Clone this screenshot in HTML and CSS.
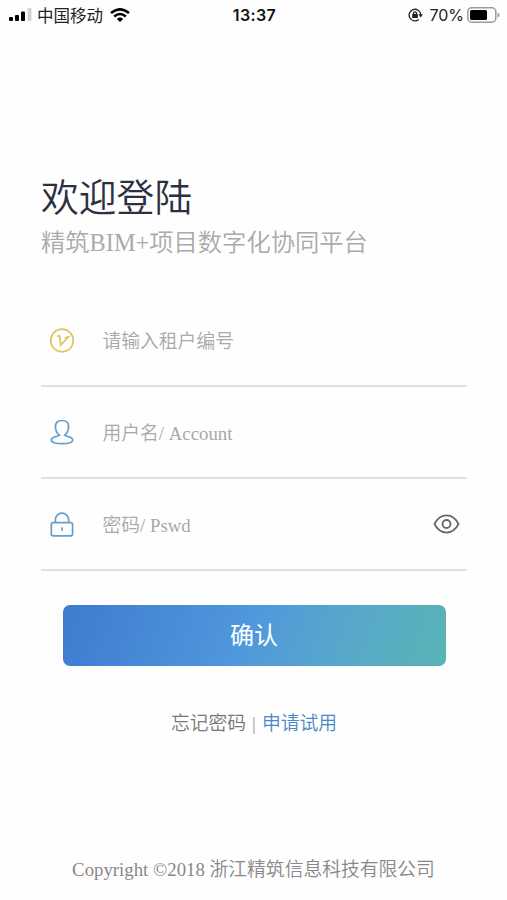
FILE: index.html
```
<!DOCTYPE html>
<html lang="zh-CN">

<head>
    <meta charset="UTF-8">
    <meta name="viewport" content="width=device-width, initial-scale=1.0">
    <title>欢迎登陆</title>
    <link rel="stylesheet" href="styles.css">
</head>

<body>
    <div class="status-bar">
        <div class="status-left">
            <svg class="signal" width="23" height="14" viewBox="0 0 23 14">
                <rect x="0" y="9" width="4" height="4" rx="1" />
                <rect x="6" y="7" width="4" height="6" rx="1" />
                <rect x="12" y="3.5" width="4" height="9.5" rx="1" />
                <rect x="18.5" y="0" width="4" height="13" rx="1" fill="#d4d4d4" />
            </svg>
            <span class="carrier">中国移动</span>
            <svg class="wifi" width="20" height="14" viewBox="0 0 20 14" fill="none" stroke="#000" stroke-width="2.6">
                <path d="M1 5Q10-2.4 19 5" />
                <path d="M4.2 8.4Q10 3.6 15.8 8.4" />
                <path d="M10 14L6.8 10.9Q10 8.2 13.2 10.9Z" fill="#000" stroke="none" />
            </svg>
        </div>
        <span class="time">13:37</span>
        <div class="status-right">
            <svg class="rotation" width="15" height="14" viewBox="0 0 15 14" fill="none" stroke="#222" stroke-width="1.3">
                <path d="M10.8 11.4A5.8 5.8 0 1 1 12.7 6.5" />
                <path d="M10.4 6.3H15L12.7 9.4Z" fill="#222" stroke="none" />
                <rect x="4.2" y="6" width="5.6" height="4" fill="#222" stroke="none" />
                <path d="M5.5 6.5V5.3A1.5 1.5 0 0 1 8.5 5.3V6.5" />
            </svg>
            <span class="percent">70%</span>
            <svg class="battery" width="33" height="16" viewBox="0 0 33 16">
                <rect x=".8" y=".8" width="28" height="14.4" rx="4" fill="none" stroke="#999" stroke-width="1.5" />
                <rect x="3" y="3" width="17" height="10" rx="1.5" />
                <path d="M30.5 5.5Q32.5 6 32.5 8T30.5 10.5Z" fill="#999" />
            </svg>
        </div>
    </div>

    <div class="container">
        <h1>欢迎登陆</h1>
        <p class="subtitle">精筑BIM+项目数字化协同平台</p>

        <form id="loginForm">
            <div class="field">
                <svg class="icon" width="26" height="26" viewBox="0 0 26 26" fill="none" stroke="#dfc65b" stroke-width="1.7">
                    <circle cx="13" cy="13.5" r="11.3" />
                    <path d="M8 9.2H10.8L11.6 18.2L19.4 10L15.8 10.8" />
                </svg>
                <input type="text" name="tenant" placeholder="请输入租户编号">
            </div>
            <div class="field">
                <svg class="icon" width="26" height="26" viewBox="0 0 26 26" fill="none" stroke="#659fce" stroke-width="1.7">
                    <path d="M10.4 16.2C8 14.3 6.4 11.4 6.4 7.8C6.4 3.8 8.8 1.5 13 1.5S19.6 3.8 19.6 7.8C19.6 11.4 18 14.3 15.6 16.2C17.6 17.8 23.7 17.8 23.7 21C23.7 23.4 19 24.7 13 24.7S2.3 23.4 2.3 21C2.3 17.8 8.4 17.8 10.4 16.2Z" />
                </svg>
                <input type="text" name="account" placeholder="用户名/ Account">
            </div>
            <div class="field">
                <svg class="icon" width="26" height="26" viewBox="0 0 26 26" fill="none" stroke="#659fce" stroke-width="1.7">
                    <rect x="2.3" y="11.6" width="21.3" height="13.2" rx="2" />
                    <path d="M6.4 11.3V8.8A6.6 6.6 0 0 1 19.6 8.8V11.3M13 16.3V19.8" />
                </svg>
                <input type="password" name="password" placeholder="密码/ Pswd">
                <svg class="eye" width="27" height="20" viewBox="0 0 27 20" fill="none" stroke="#686868" stroke-width="1.8">
                    <path d="M1.5 10C7.4-1.4 19.6-1.4 25.5 10C19.6 21.4 7.4 21.4 1.5 10Z" />
                    <circle cx="13.5" cy="10" r="4" />
                </svg>
            </div>

            <button type="button">确认</button>
        </form>

        <div class="links">
            <a class="forgot">忘记密码</a><span class="divider">|</span><a class="trial">申请试用</a>
        </div>
    </div>

    <footer>Copyright ©2018 浙江精筑信息科技有限公司</footer>
</body>

</html>
```

FILE: styles.css
```
* {
    box-sizing: border-box;
}

body {
    display: flex;
    flex-direction: column;
    height: 900px;
    margin: 0;
    background-color: #fefefe;
    font-family: "Liberation Serif", "Noto Sans CJK SC", serif;
    font-size: 18.8px;
    font-weight: 350;
}

/* Status bar */

.status-bar {
    display: grid;
    grid-template-columns: 1fr auto 1fr;
    align-items: center;
    height: 29px;
    padding: 0 7px 0 9px;
    font-family: Inter, "Noto Sans CJK SC", sans-serif;
    font-size: 16px;
    font-weight: 400;
    color: #222;
}

.status-left,
.status-right {
    display: flex;
    align-items: center;
}

.status-right {
    justify-content: flex-end;
}

.carrier {
    margin: 0 7px 0 5px;
    font-size: 16.5px;
}

.time {
    font-weight: 600;
    letter-spacing: 0.4px;
    color: #111;
}

.percent {
    margin: 0 3px 0 6px;
}

/* Login form */

.container {
    padding: 140px 40px 0 41px;
}

h1 {
    margin: 0;
    font-size: 37.8px;
    font-weight: 350;
    line-height: 58px;
    color: #2c3040;
}

.subtitle {
    margin: 0;
    font-size: 24.3px;
    line-height: 32px;
    color: #aaa;
}

form {
    margin-top: 36px;
}

.field {
    display: flex;
    align-items: center;
    height: 92px;
    padding: 0 7px 0 7.5px;
    border-bottom: 2px solid #dfdfdf;
}

.icon {
    flex: none;
    margin-right: 28px;
}

input {
    flex: 1;
    min-width: 0;
    padding: 3px 0 0;
    border: none;
    outline: none;
    background: none;
    font: inherit;
    color: #333;
}

input::placeholder {
    color: #a8a8a8;
}

button {
    display: block;
    width: 383px;
    height: 61px;
    margin: 34px auto 0;
    padding: 0 0 4px;
    border: none;
    border-radius: 7px;
    background: linear-gradient(110deg, #3d7bcf 0%, #5098dc 48%, #58a9c9 75%, #58b4b5 100%);
    font-family: inherit;
    font-size: 24px;
    color: white;
}

.links {
    margin-top: 44px;
    line-height: 28px;
    text-align: center;
    color: #777;
}

.divider {
    margin: 0 6px;
    color: #999;
}

.trial {
    color: #4a88c5;
}

footer {
    margin-top: auto;
    padding-bottom: 16px;
    line-height: 28px;
    text-align: center;
    color: #888;
}
```
